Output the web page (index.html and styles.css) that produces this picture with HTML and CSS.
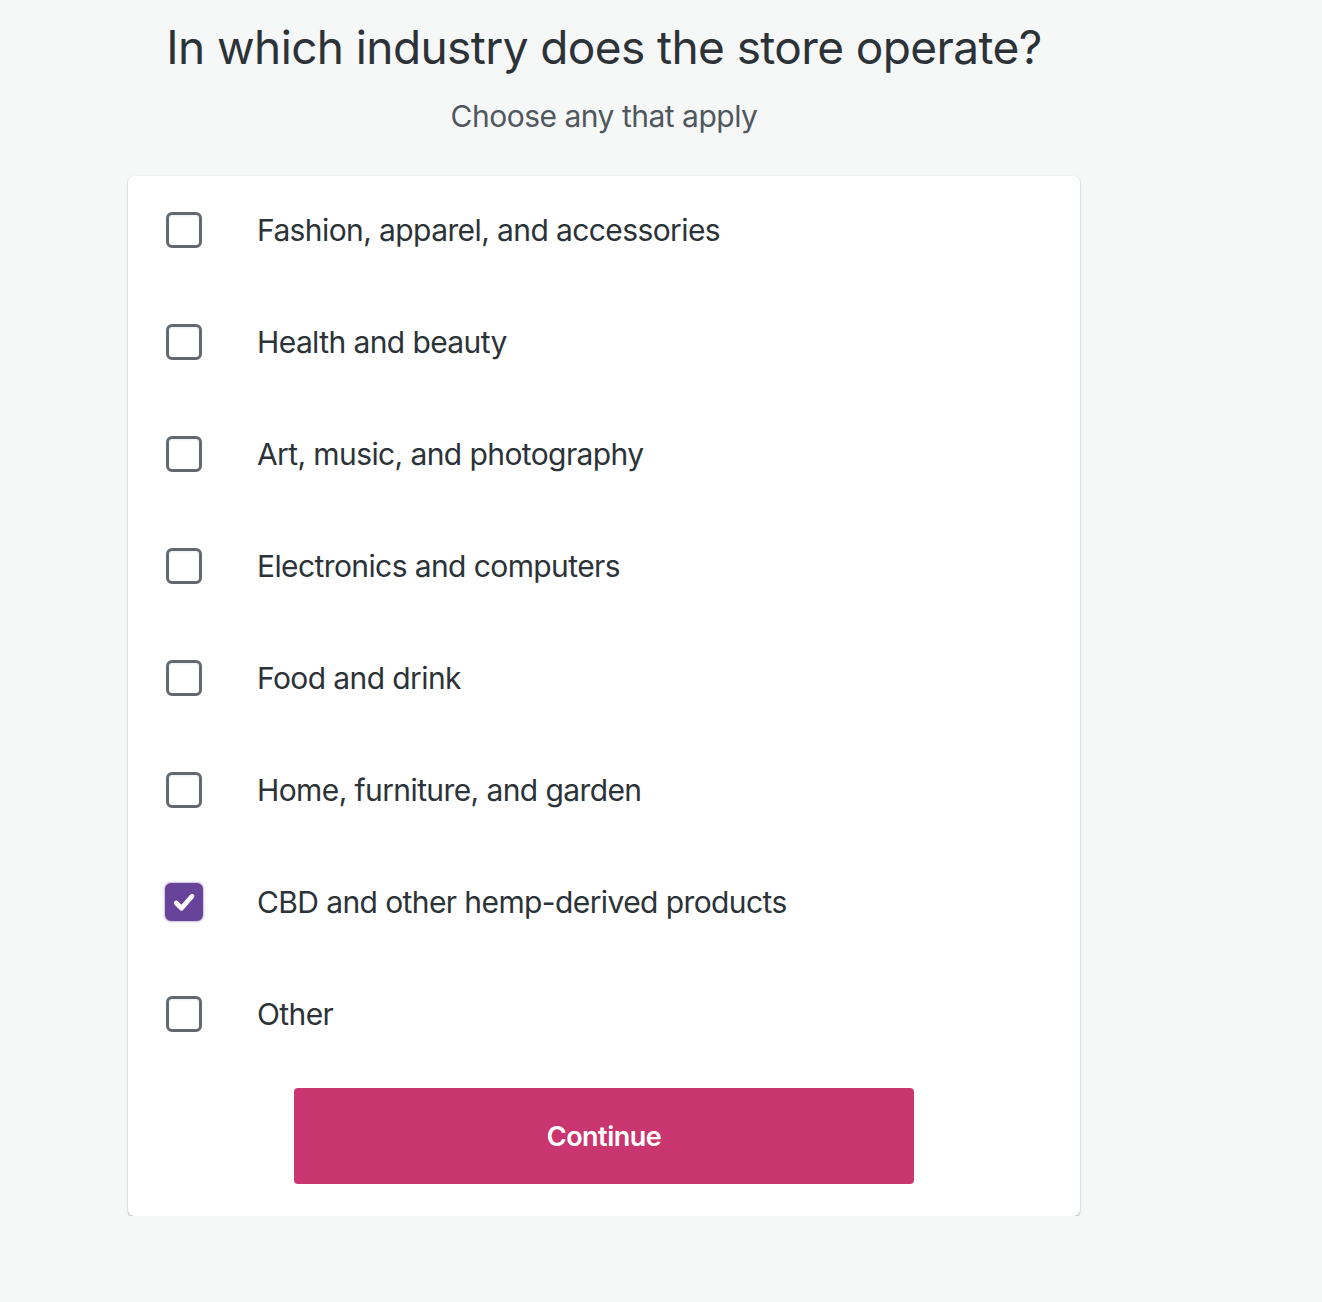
FILE: index.html
```html
<!DOCTYPE html>
<html>
<head>
<meta charset="utf-8">
<link rel="stylesheet" href="styles.css">
</head>
<body>
<div class="page">
  <h1 class="title">In which industry does the store operate?</h1>
  <p class="subtitle">Choose any that apply</p>
  <div class="card">
    <label class="row"><span class="box"></span><span class="label">Fashion, apparel, and accessories</span></label>
    <label class="row"><span class="box"></span><span class="label">Health and beauty</span></label>
    <label class="row"><span class="box"></span><span class="label">Art, music, and photography</span></label>
    <label class="row"><span class="box"></span><span class="label">Electronics and computers</span></label>
    <label class="row"><span class="box"></span><span class="label">Food and drink</span></label>
    <label class="row"><span class="box"></span><span class="label">Home, furniture, and garden</span></label>
    <label class="row"><span class="box checked"><svg viewBox="0 0 24 24" width="30" height="30"><path d="M5.8 12.8l4.2 4.2L18.4 7.4" fill="none" stroke="#fff" stroke-width="3.8" stroke-linecap="round" stroke-linejoin="round"/></svg></span><span class="label">CBD and other hemp-derived products</span></label>
    <label class="row"><span class="box"></span><span class="label">Other</span></label>
    <div class="actions"><button class="btn">Continue</button></div>
  </div>
</div>
</body>
</html>
```
FILE: styles.css
```css
html, body {
  margin: 0;
  padding: 0;
  background: #f6f7f7;
  font-family: Inter, "Noto Sans", sans-serif;
  color: #2c3338;
}
.page {
  width: 952px;
  margin-left: 128px;
  padding-top: 18px;
}
.title {
  margin: 0;
  font-size: 46px;
  font-weight: 400;
  line-height: 58px;
  text-align: center;
  color: #2c3338;
  letter-spacing: -0.6px;
}
.subtitle {
  margin: 20px 0 0;
  font-size: 30px;
  line-height: 40px;
  text-align: center;
  color: #50575e;
  letter-spacing: -0.5px;
}
.card {
  margin-top: 40px;
  background: #fff;
  border-radius: 6px;
  box-shadow: 0 1px 2px rgba(0,0,0,0.35), 0 0 1px rgba(0,0,0,0.04);
  padding: 0 0 32px;
}
.row {
  display: flex;
  align-items: center;
  height: 108px;
  padding-bottom: 4px;
  padding-left: 38px;
}
.box {
  width: 36px;
  height: 36px;
  box-sizing: border-box;
  border: 3px solid #646970;
  border-radius: 6px;
  box-shadow: inset 0 1px 2px rgba(0,0,0,0.08);
  flex: none;
  display: flex;
  align-items: center;
  justify-content: center;
}
.box.checked {
  width: 38px;
  height: 38px;
  margin-left: -1px;
  margin-right: -1px;
  background: #674399;
  border-color: #674399;
  border-radius: 6px;
  box-shadow: 0 0 2px 1px rgba(103,67,153,0.35);
}
.label {
  margin-left: 55px;
  font-size: 30px;
  letter-spacing: -0.6px;
  color: #2c3338;
}
.actions {
  display: flex;
  justify-content: center;
  margin-top: 16px;
}
.btn {
  width: 620px;
  height: 96px;
  border: none;
  border-radius: 4px;
  background: #c9356e;
  color: #fff;
  font-family: Inter, "Noto Sans", sans-serif;
  font-size: 27px;
  font-weight: 600;
  letter-spacing: -0.5px;
}
```
